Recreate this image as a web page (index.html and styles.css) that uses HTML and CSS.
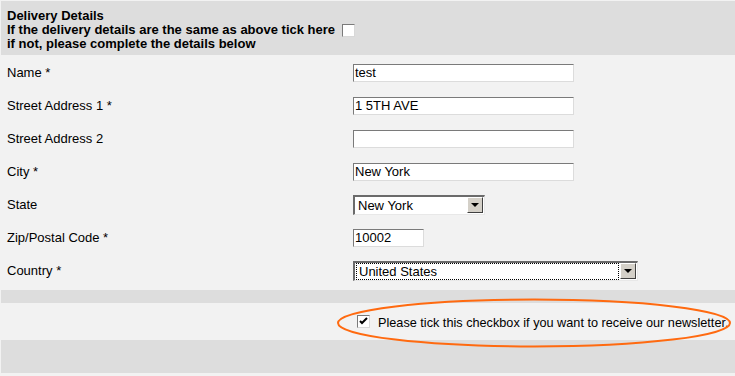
FILE: index.html
```
<!DOCTYPE html>
<html lang="en">
<head>
    <meta charset="UTF-8">
    <meta name="viewport" content="width=device-width, initial-scale=1.0">
    <title>Delivery Details</title>
    <link rel="stylesheet" href="styles.css">
</head>
<body>
    <div class="form-wrap">
        <!-- Delivery header -->
        <div class="section-head">
            <div class="head-title">Delivery Details</div>
            <div>If the delivery details are the same as above tick here <span class="tick"></span></div>
            <div>if not, please complete the details below</div>
        </div>

        <!-- Delivery fields -->
        <div class="fields">
            <label class="field-label">Name *</label>
            <div class="field-cell"><input class="text-input" type="text" value="test"></div>

            <label class="field-label">Street Address 1 *</label>
            <div class="field-cell"><input class="text-input" type="text" value="1 5TH AVE"></div>

            <label class="field-label">Street Address 2</label>
            <div class="field-cell"><input class="text-input" type="text" value=""></div>

            <label class="field-label">City *</label>
            <div class="field-cell"><input class="text-input" type="text" value="New York"></div>

            <label class="field-label">State</label>
            <div class="field-cell">
                <div class="select-box state-select">
                    <span class="select-value">New York</span>
                    <span class="select-btn"><span class="arrow"></span></span>
                </div>
            </div>

            <label class="field-label">Zip/Postal Code *</label>
            <div class="field-cell"><input class="text-input zip-input" type="text" value="10002"></div>

            <label class="field-label">Country *</label>
            <div class="field-cell">
                <div class="select-box country-select">
                    <span class="select-value focused">United States</span>
                    <span class="select-btn"><span class="arrow"></span></span>
                </div>
            </div>
        </div>

        <div class="spacer-band"></div>

        <!-- Newsletter -->
        <div class="newsletter-row">
            <div class="newsletter">
                <span class="tick checked">
                    <svg width="9" height="9" viewBox="0 0 9 9"><path d="M1 4 L3 6 L8 1" fill="none" stroke="#000" stroke-width="2"/></svg>
                </span>
                <span class="newsletter-text">Please tick this checkbox if you want to receive our newsletter.</span>
                <svg class="highlight" width="400" height="52" viewBox="0 0 400 52">
                    <ellipse cx="198" cy="26" rx="196" ry="23.5" fill="none" stroke="#ff6a10" stroke-width="2"/>
                </svg>
            </div>
        </div>

        <div class="footer-band"></div>
    </div>
</body>
</html>
```

FILE: styles.css
```
/* Delivery details form */
body {
    font-family: "Liberation Sans", Arial, sans-serif;
    font-size: 13px;
    color: #000;
    background-color: #f2f2f2;
    margin: 0;
    padding: 0;
}
.form-wrap {
    width: 735px;
    padding-top: 1px;
}

/* Header band */
.section-head {
    background-color: #dddddd;
    margin-left: 1px;
    height: 54px;
    padding: 8px 6px 0;
    box-sizing: border-box;
    font-weight: bold;
    line-height: 14px;
}

/* Rows */
.fields {
    display: grid;
    grid-template-columns: 352px 1fr;
    grid-auto-rows: 33px;
    padding-top: 1px;
}
.field-label {
    display: flex;
    align-items: center;
    padding-left: 7px;
}
.field-cell {
    display: flex;
    align-items: center;
    padding-left: 1px;
}

/* Classic inset inputs */
.text-input {
    width: 221px;
    height: 18px;
    box-sizing: border-box;
    margin: 0;
    padding: 0 1px;
    font-family: inherit;
    font-size: 13px;
    background: #fff;
    border-top: 1px solid #7a7a7a;
    border-left: 1px solid #7a7a7a;
    border-right: 1px solid #dcdcdc;
    border-bottom: 1px solid #dcdcdc;
    outline: none;
}
.zip-input {
    width: 71px;
}

/* Fake selects */
.select-box {
    display: flex;
    align-items: center;
    height: 20px;
    box-sizing: border-box;
    background: #fff;
    border-top: 2px solid #6b6b6b;
    border-left: 2px solid #6b6b6b;
    border-right: 1px solid #e8e8e8;
    border-bottom: 1px solid #e8e8e8;
}
.state-select {
    width: 132px;
}
.country-select {
    width: 285px;
}
.select-value {
    flex-grow: 1;
    padding-left: 3px;
    line-height: 15px;
}
.select-value.focused {
    margin: 0 1px;
    padding-left: 2px;
    border: 1px dotted #000;
}
.select-btn {
    display: flex;
    align-items: center;
    justify-content: center;
    width: 16px;
    height: 16px;
    box-sizing: border-box;
    background-color: #d4d0c8;
    border-top: 1px solid #fff;
    border-left: 1px solid #fff;
    border-right: 1px solid #404040;
    border-bottom: 1px solid #404040;
    margin-right: 1px;
}
.arrow {
    width: 0;
    height: 0;
    border-left: 4px solid transparent;
    border-right: 4px solid transparent;
    border-top: 4px solid #000;
}

/* Checkboxes */
.tick {
    display: inline-flex;
    align-items: center;
    justify-content: center;
    width: 13px;
    height: 13px;
    box-sizing: border-box;
    background: #fff;
    border-top: 1px solid #7a7a7a;
    border-left: 1px solid #7a7a7a;
    border-right: 1px solid #d8d8d8;
    border-bottom: 1px solid #d8d8d8;
    vertical-align: -3px;
    margin-left: 3px;
}

/* Bands */
.spacer-band {
    background-color: #dddddd;
    margin: 3px 0 0 1px;
    height: 13px;
}
.newsletter-row {
    height: 37px;
    display: flex;
    align-items: center;
    padding-left: 357px;
}
.newsletter {
    position: relative;
    display: flex;
    align-items: center;
    white-space: nowrap;
}
.newsletter .tick {
    margin-left: 0;
    margin-right: 8px;
}
.newsletter-text {
    font-size: 12.7px;
    margin-top: 3px;
}
.highlight {
    position: absolute;
    left: -21px;
    top: -16px;
}
.footer-band {
    background-color: #dddddd;
    margin-left: 1px;
    height: 33px;
    border-bottom: 1px solid #f2f2f2;
    box-shadow: 0 1px 0 #f2f2f2, 0 3px 0 #cccccc;
}
```
